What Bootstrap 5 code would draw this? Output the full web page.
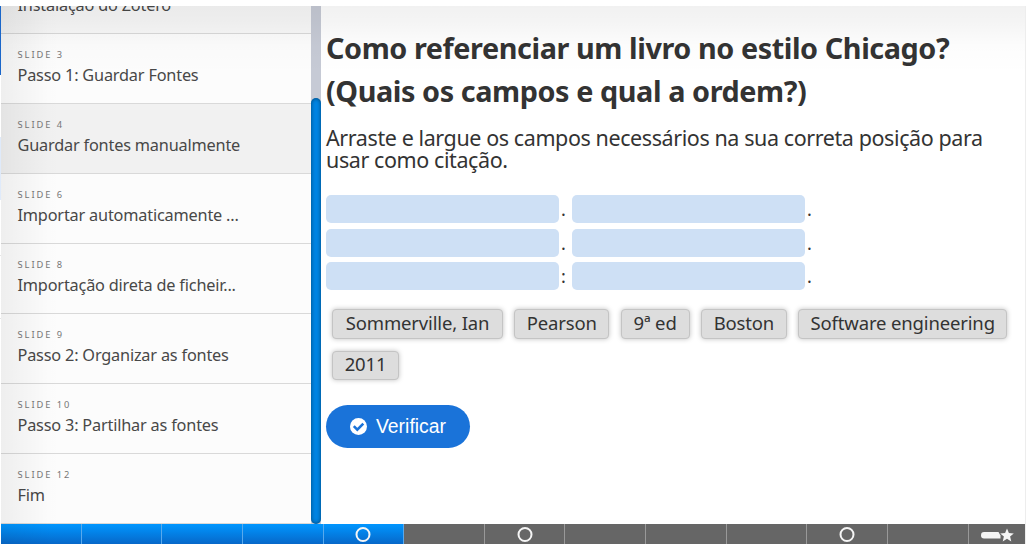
<!DOCTYPE html>
<html lang="pt">
<head>
<meta charset="utf-8">
<title>Passo 1: Guardar Fontes</title>
<link href="https://cdn.jsdelivr.net/npm/bootstrap@5.3.0/dist/css/bootstrap.min.css" rel="stylesheet">
<style>
body{width:1028px;height:546px;background:#fff;font-family:"Noto Sans","Open Sans",sans-serif;color:#333}
.page-edge{width:1px;height:538px;background:linear-gradient(#1a66c9 69px,#fff 69px 131px,#dfeafa 131px 194px,#fff 194px 249px,#e5e5e5 249px 250px,#fff 250px 312px,#e5e5e5 312px 313px,#fff 313px)}
.viewer{width:1025px;height:538px;border-right:1px solid #ededed}
.shade{inset:0;pointer-events:none;background:linear-gradient(rgba(0,0,0,.055),rgba(0,0,0,.045) 15px,rgba(0,0,0,.012) 40px,transparent 68px),linear-gradient(90deg,rgba(0,0,0,.055),rgba(0,0,0,.035) 18px,rgba(0,0,0,.005) 48px,transparent 62px)}
.stage{height:518px}
.slides{width:310px;height:518px;background:#fcfcfc}
.slide-item{height:70px;flex:none;border:0;border-bottom:1px solid #d9d9d9;padding:15px 16px 0 16.5px;background:none;color:#484848;border-radius:0}
.slide-item.first-cut{margin-top:-42px;background:#f8f8f8}
.slide-item.current{background:#f1f1f1}
.slide-no{font-size:9.3px;line-height:12px;letter-spacing:1.95px;color:#777}
.slide-name{font-size:16.3px;line-height:24px;margin-top:2px;letter-spacing:-.19px;white-space:nowrap}
.track{width:10px;background:#c6cad5}
.thumb{height:426px;margin-top:92px;border-radius:5px;background:#0085e4;box-shadow:inset 0 0 4px rgba(0,0,0,.5)}
.content{padding:20px 0 0 5px;min-width:0}
h1{font-size:28.8px;line-height:43px;letter-spacing:-.42px;margin:0;white-space:nowrap}
.intro{font-size:21.5px;line-height:22px;margin:15px 0 24px;letter-spacing:-.41px;white-space:nowrap}
.drop{width:233px;height:28px;border-radius:5px;background:#cee0f5}
.sep{width:13px;padding-left:2px;font-size:18px;line-height:28px;color:#333}
.answers{padding:19px 0 0 6px;column-gap:11.3px;row-gap:12px}
.term{height:30px;border:1px solid #c4c4c4;border-radius:4px;background:#ddd;padding:0;text-align:center;font-size:18.5px;line-height:26px;letter-spacing:-.15px;box-shadow:0 0 5px rgba(0,0,0,.25);white-space:nowrap;color:#333}
.term.low{height:29px;line-height:24px}
.verify{width:144px;height:43px;margin-top:25px;background:#1a73d9;color:#fff;font:19.4px/43px "Liberation Sans",Arial,sans-serif}
.progress-row{height:20px;background:#666}
.seg{flex:0 0 80.65px;border-right:1px solid #999}
.seg.done{background:linear-gradient(#0096ff,#0768c9);border-color:#58a9ed}
.seg.tail{flex:1 1 0;border:0}
</style>
</head>
<body class="overflow-hidden">
<div class="d-flex" style="padding-top:6px">
<div class="page-edge flex-shrink-0"></div>
<main class="viewer position-relative flex-shrink-0">
<div class="stage d-flex">
<nav class="slides list-group rounded-0 overflow-hidden flex-shrink-0">
<a class="slide-item first-cut list-group-item"><div class="slide-no">SLIDE 2</div><div class="slide-name">Instalação do Zotero</div></a>
<a class="slide-item list-group-item"><div class="slide-no">SLIDE 3</div><div class="slide-name">Passo 1: Guardar Fontes</div></a>
<a class="slide-item list-group-item current"><div class="slide-no">SLIDE 4</div><div class="slide-name">Guardar fontes manualmente</div></a>
<a class="slide-item list-group-item"><div class="slide-no">SLIDE 6</div><div class="slide-name">Importar automaticamente ...</div></a>
<a class="slide-item list-group-item"><div class="slide-no">SLIDE 8</div><div class="slide-name">Importação direta de ficheir...</div></a>
<a class="slide-item list-group-item"><div class="slide-no">SLIDE 9</div><div class="slide-name">Passo 2: Organizar as fontes</div></a>
<a class="slide-item list-group-item"><div class="slide-no">SLIDE 10</div><div class="slide-name">Passo 3: Partilhar as fontes</div></a>
<a class="slide-item list-group-item"><div class="slide-no">SLIDE 12</div><div class="slide-name">Fim</div></a>
</nav>
<div class="track flex-shrink-0"><div class="thumb"></div></div>
<section class="content flex-grow-1">
<h1 class="fw-bold">Como referenciar um livro no estilo Chicago?<br>(Quais os campos e qual a ordem?)</h1>
<p class="intro">Arraste e largue os campos necessários na sua correta posição para<br>usar como citação.</p>
<div class="d-flex" style="margin-bottom:6px"><div class="drop"></div><span class="sep">.</span><div class="drop"></div><span class="sep">.</span></div>
<div class="d-flex" style="margin-bottom:5px"><div class="drop"></div><span class="sep">.</span><div class="drop"></div><span class="sep">.</span></div>
<div class="d-flex"><div class="drop"></div><span class="sep">:</span><div class="drop"></div><span class="sep">.</span></div>
<div class="answers d-flex flex-wrap">
<div class="term" style="width:171px">Sommerville, Ian</div>
<div class="term" style="width:95px">Pearson</div>
<div class="term" style="width:69px">9ª ed</div>
<div class="term" style="width:86px">Boston</div>
<div class="term" style="width:209px">Software engineering</div>
<div class="term low" style="width:67px">2011</div>
</div>
<button class="verify btn rounded-pill border-0 p-0 d-flex align-items-center justify-content-center"><svg width="17" height="17" viewBox="0 0 17 17" style="margin-right:9px"><circle cx="8.5" cy="8.5" r="8.5" fill="#fff"/><path d="M3.8 8.2l3.5 3.5 6-6" fill="none" stroke="#1a73d9" stroke-width="2.6"/></svg><span>Verificar</span></button>
</section>
</div>
<div class="progress-row d-flex">
<div class="seg done"></div><div class="seg done"></div><div class="seg done"></div><div class="seg done"></div>
<div class="seg done d-flex align-items-center justify-content-center"><svg width="16" height="16"><circle cx="8" cy="8.500" r="6.500" fill="none" stroke="#f5f5f5" stroke-width="2"/></svg></div>
<div class="seg"></div>
<div class="seg d-flex align-items-center justify-content-center"><svg width="16" height="16"><circle cx="8" cy="8.500" r="6.500" fill="none" stroke="#f5f5f5" stroke-width="2"/></svg></div>
<div class="seg"></div><div class="seg"></div><div class="seg"></div>
<div class="seg d-flex align-items-center justify-content-center"><svg width="16" height="16"><circle cx="8" cy="8.500" r="6.500" fill="none" stroke="#f5f5f5" stroke-width="2"/></svg></div>
<div class="seg"></div>
<div class="seg tail"><svg class="d-block" width="56" height="20" viewBox="0 0 56 20" fill="#f5f5f5"><path d="M15 8H29.5L31.5 11.5V14.5H15Q12 14.5 12 11.2Q12 8 15 8Z"/><path d="M38 4.500l1.900 4.500 4.900.4-3.700 3.200 1.200 4.900-4.300-2.700-4.300 2.700 1.200-4.900-3.700-3.200 4.900-.4z"/></svg></div>
</div>
<div class="shade position-absolute"></div>
</main>
</div>
<script src="https://cdn.jsdelivr.net/npm/bootstrap@5.3.0/dist/js/bootstrap.bundle.min.js"></script>
</body>
</html>
